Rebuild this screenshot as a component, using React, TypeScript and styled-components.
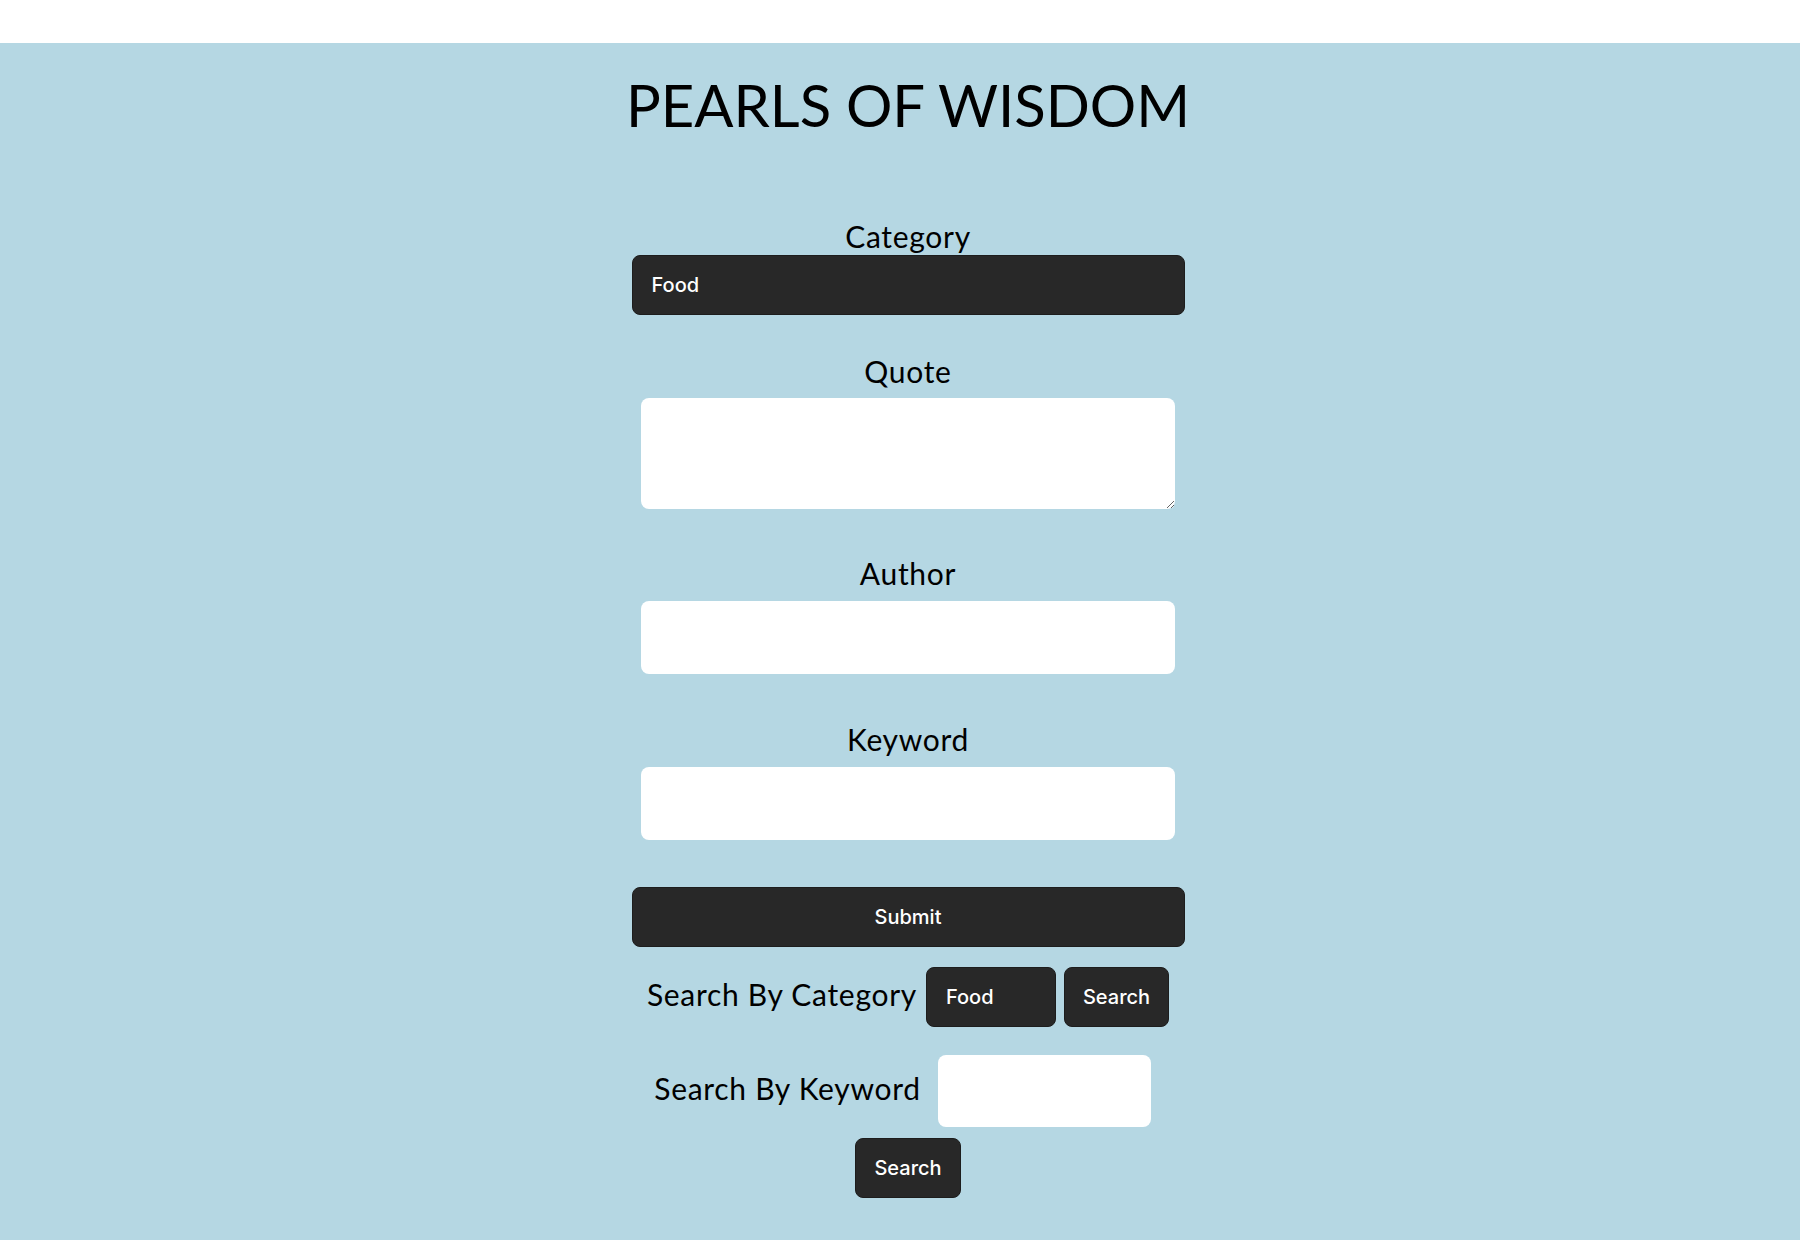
import React from "react";
import styled, { createGlobalStyle } from "styled-components";

const GlobalStyle = createGlobalStyle`
  html, body {
    margin: 0;
    padding: 0;
    background: #ffffff;
  }
  * { box-sizing: border-box; }
`;

const Page = styled.div`
  padding-top: 43px;
  background: #ffffff;
`;

const Main = styled.main`
  min-height: 1197px;
  background: #b5d7e3;
  padding-left: 16px;
  display: flex;
  flex-direction: column;
  align-items: center;
  font-family: "Lato", "Open Sans", sans-serif;
  color: #000000;
`;

const Title = styled.h1`
  margin: 27px 0 0;
  font-size: 58px;
  font-weight: 400;
  line-height: 1.2;
`;

const Form = styled.form`
  display: flex;
  flex-direction: column;
  align-items: center;
  margin-top: 78px;
`;

const Field = styled.div<{ $top: number; $gap: number }>`
  display: flex;
  flex-direction: column;
  align-items: center;
  margin-top: ${(p) => p.$top}px;
  gap: ${(p) => p.$gap}px;
`;

const Label = styled.label`
  font-size: 30px;
  font-weight: 400;
  line-height: 1.2;
  letter-spacing: 0.7px;
  white-space: nowrap;
`;

const RowLabel = styled(Label)`
  padding-bottom: 5px;
`;

const DarkSelect = styled.select<{ $w: number }>`
  appearance: none;
  -webkit-appearance: none;
  width: ${(p) => p.$w}px;
  height: 60px;
  padding: 0 19px;
  border: 1px solid #1d1d1d;
  border-radius: 8px;
  background: #282828;
  color: #ffffff;
  font-family: "Inter", "Liberation Sans", sans-serif;
  font-size: 20px;
  font-weight: 500;
  outline: none;
`;

const TextArea = styled.textarea`
  width: 534px;
  height: 111px;
  border: none;
  border-radius: 8px;
  background: #ffffff;
  padding: 10px 14px;
  font-family: "Inter", sans-serif;
  font-size: 18px;
  outline: none;
`;

const TextInput = styled.input<{ $w: number; $h: number }>`
  width: ${(p) => p.$w}px;
  height: ${(p) => p.$h}px;
  border: none;
  border-radius: 8px;
  background: #ffffff;
  padding: 0 14px;
  font-family: "Inter", sans-serif;
  font-size: 18px;
  outline: none;
`;

const DarkButton = styled.button<{ $w?: number; $top: number }>`
  width: ${(p) => (p.$w ? `${p.$w}px` : "auto")};
  height: 60px;
  margin-top: ${(p) => p.$top}px;
  padding: 0 18px;
  border: 1px solid #1d1d1d;
  border-radius: 8px;
  background: #282828;
  color: #ffffff;
  font-family: "Inter", "Liberation Sans", sans-serif;
  font-size: 20px;
  font-weight: 500;
  cursor: pointer;
`;

const Row = styled.div<{ $top: number; $gap: number; $padRight?: number }>`
  display: flex;
  align-items: center;
  margin-top: ${(p) => p.$top}px;
  gap: ${(p) => p.$gap}px;
  padding-right: ${(p) => p.$padRight ?? 0}px;
`;

const Buttons = styled.div`
  display: flex;
  align-items: center;
  gap: 8px;
`;

export default function App() {
  return (
    <>
      <GlobalStyle />
      <Page>
        <Main>
          <Title>PEARLS OF WISDOM</Title>
          <Form onSubmit={(e) => e.preventDefault()}>
            <Field $top={0} $gap={1}>
              <Label htmlFor="category">Category</Label>
              <DarkSelect id="category" $w={553} defaultValue="Food">
                <option>Food</option>
                <option>Life</option>
                <option>Love</option>
              </DarkSelect>
            </Field>
            <Field $top={38} $gap={9}>
              <Label htmlFor="quote">Quote</Label>
              <TextArea id="quote" />
            </Field>
            <Field $top={46} $gap={10}>
              <Label htmlFor="author">Author</Label>
              <TextInput id="author" $w={534} $h={73} />
            </Field>
            <Field $top={47} $gap={10}>
              <Label htmlFor="keyword">Keyword</Label>
              <TextInput id="keyword" $w={534} $h={73} />
            </Field>
            <DarkButton type="submit" $w={553} $top={47}>
              Submit
            </DarkButton>
          </Form>
          <Row $top={20} $gap={9}>
            <RowLabel htmlFor="searchCategory">Search By Category</RowLabel>
            <Buttons>
              <DarkSelect id="searchCategory" $w={130} defaultValue="Food">
                <option>Food</option>
                <option>Life</option>
                <option>Love</option>
              </DarkSelect>
              <DarkButton type="button" $top={0}>
                Search
              </DarkButton>
            </Buttons>
          </Row>
          <Row $top={28} $gap={17} $padRight={11}>
            <RowLabel htmlFor="searchKeyword">Search By Keyword</RowLabel>
            <TextInput id="searchKeyword" $w={213} $h={72} />
          </Row>
          <DarkButton type="button" $top={11}>
            Search
          </DarkButton>
        </Main>
      </Page>
    </>
  );
}
